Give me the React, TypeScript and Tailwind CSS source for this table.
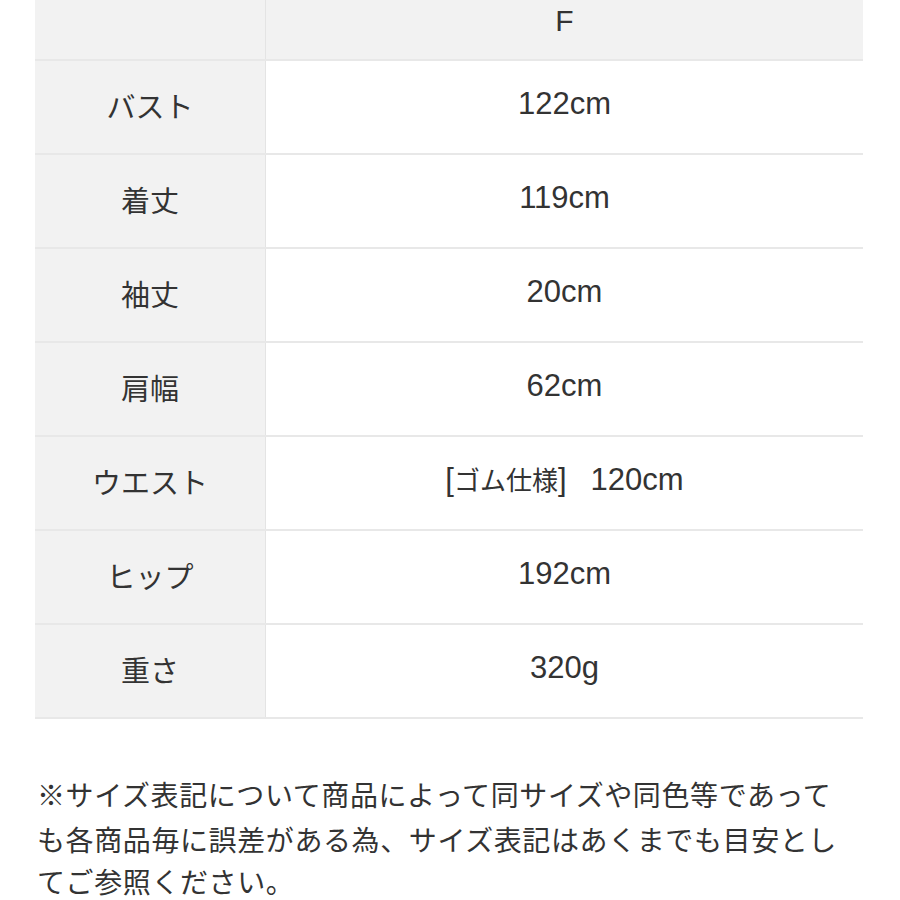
import React from "react";

const rows: [string, React.ReactNode][] = [
  ["バスト", "122cm"],
  ["着丈", "119cm"],
  ["袖丈", "20cm"],
  ["肩幅", "62cm"],
  [
    "ウエスト",
    <span key="w">
      [<span className="text-[26px]">ゴム仕様</span>]<span className="inline-block w-[24px]"> </span>120cm
    </span>,
  ],
  ["ヒップ", "192cm"],
  ["重さ", "320g"],
];

export default function App() {
  return (
    <div
      className="w-[900px] h-[900px] overflow-hidden bg-white text-[#333333]"
      style={{ fontFamily: '"Noto Sans CJK JP", "Noto Sans", sans-serif' }}
    >
      <div className="ml-[35px] w-[828px]">
        <div className="flex h-[61px] border-b-2 border-[#e8e8e8] bg-[#f2f2f2]">
          <div className="w-[231px] border-r border-[#e4e4e4]" />
          <div
            className="flex flex-1 items-center justify-center pb-[18px] text-[30px]"
            style={{ fontFamily: '"Liberation Sans", "Noto Sans CJK JP", sans-serif' }}
          >
            F
          </div>
        </div>
        {rows.map(([k, v]) => (
          <div key={k} className="flex h-[94px] border-b-2 border-[#e8e8e8]">
            <div className="flex w-[231px] items-center justify-center border-r border-[#e4e4e4] bg-[#f2f2f2] pb-[3px] text-[29px]">
              {k}
            </div>
            <div
              className="flex flex-1 items-center justify-center bg-white pb-[5px] text-[31px]"
              style={{ fontFamily: '"Liberation Sans", "Noto Sans CJK JP", sans-serif' }}
            >
              {v}
            </div>
          </div>
        ))}
      </div>
      <div className="ml-[37px] mt-[53px] text-[28px] leading-[44.5px] tracking-[0.6px] whitespace-nowrap">
        <div>※サイズ表記について商品によって同サイズや同色等であって</div>
        <div>も各商品毎に誤差がある為、サイズ表記はあくまでも目安とし</div>
        <div className="leading-[40px]">てご参照ください。</div>
      </div>
    </div>
  );
}
